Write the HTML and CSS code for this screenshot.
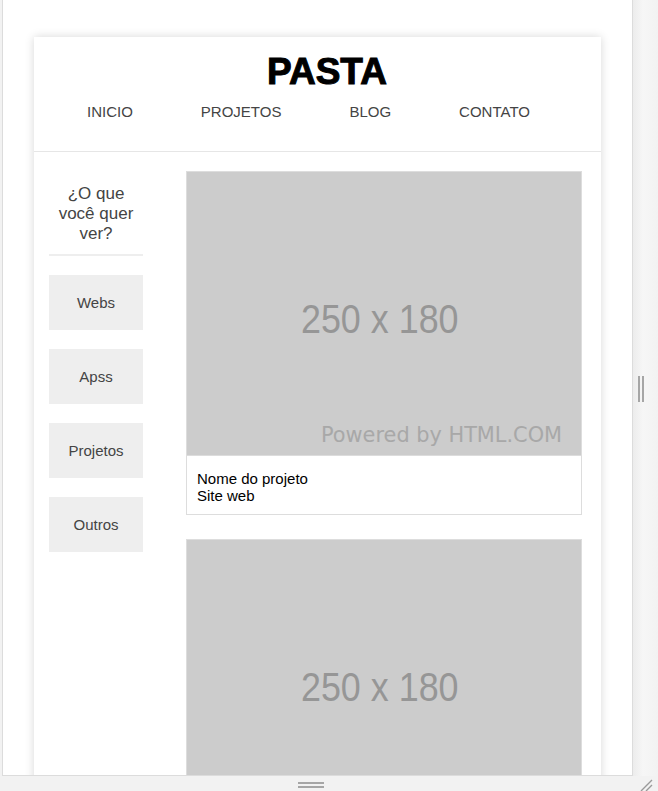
FILE: index.html
```html
<!DOCTYPE html>
<html lang="pt">
<head>
<meta charset="utf-8">
<title>PASTA</title>
<link rel="stylesheet" href="styles.css">
</head>
<body>
<div class="stage">
  <div class="top-row">
    <div class="frame">
      <div class="card">
        <header class="site-header">
          <h1 class="logo">PASTA</h1>
          <nav class="nav">
            <a href="#">INICIO</a>
            <a href="#">PROJETOS</a>
            <a href="#">BLOG</a>
            <a href="#">CONTATO</a>
          </nav>
        </header>
        <div class="content">
          <aside class="sidebar">
            <h2 class="side-title">¿O que você quer ver?</h2>
            <a class="side-btn" href="#">Webs</a>
            <a class="side-btn" href="#">Apss</a>
            <a class="side-btn" href="#">Projetos</a>
            <a class="side-btn" href="#">Outros</a>
          </aside>
          <main class="projects">
            <div class="project">
              <div class="thumb">
                <svg viewBox="0 0 250 180" preserveAspectRatio="none" xmlns="http://www.w3.org/2000/svg">
                  <rect width="250" height="180" fill="#cccccc"/>
                  <text x="122.3" y="102" text-anchor="middle" class="ph-size" textLength="100" lengthAdjust="spacingAndGlyphs">250 x 180</text>
                  <text x="238" y="171.5" text-anchor="end" class="ph-powered" textLength="153" lengthAdjust="spacingAndGlyphs">Powered by HTML.COM</text>
                </svg>
              </div>
              <div class="caption">Nome do projeto<br>Site web</div>
            </div>
            <div class="project">
              <div class="thumb">
                <svg viewBox="0 0 250 180" preserveAspectRatio="none" xmlns="http://www.w3.org/2000/svg">
                  <rect width="250" height="180" fill="#cccccc"/>
                  <text x="122.3" y="102" text-anchor="middle" class="ph-size" textLength="100" lengthAdjust="spacingAndGlyphs">250 x 180</text>
                </svg>
              </div>
            </div>
          </main>
        </div>
      </div>
    </div>
    <div class="v-gutter">
      <span class="v-grip"></span>
    </div>
  </div>
  <div class="h-gutter">
    <span class="h-grip"></span>
    <svg class="resize" width="14" height="12" viewBox="0 0 14 12" xmlns="http://www.w3.org/2000/svg">
      <path d="M2 12 L13 1 M7 12 L13 6" stroke="#9a9a9a" stroke-width="1.4" fill="none"/>
    </svg>
  </div>
</div>
</body>
</html>
```

FILE: styles.css
```css
* { box-sizing: border-box; }
html, body { margin: 0; padding: 0; }
body {
  background: #f2f2f2;
  font-family: "Liberation Sans", Arial, sans-serif;
  width: 658px;
  height: 791px;
  overflow: hidden;
}
.stage {
  display: flex;
  flex-direction: column;
  height: 791px;
  padding-left: 2px;
}
.top-row {
  display: flex;
  height: 776px;
}
.frame {
  width: 631px;
  height: 776px;
  background: #fff;
  border-left: 1px solid #dcdcdc;
  border-right: 1px solid #dcdcdc;
  border-bottom: 1px solid #dcdcdc;
  overflow: hidden;
  padding: 37px 31px 0 31px;
}
.v-gutter {
  flex: 1;
  display: flex;
  align-items: center;
  justify-content: center;
  background: linear-gradient(to right, #ececec, #f6f6f6 40%, #f2f2f2);
}
.v-grip {
  width: 6px;
  height: 26px;
  border-left: 2px solid #a6a6a6;
  border-right: 2px solid #a6a6a6;
  margin-left: -9px;
  margin-top: 2px;
}
.h-gutter {
  flex: 1;
  display: flex;
  align-items: center;
  justify-content: center;
  padding-right: 38px;
  background: #f2f2f2;
}
.h-grip {
  width: 26px;
  height: 6px;
  border-top: 2px solid #a6a6a6;
  border-bottom: 2px solid #a6a6a6;
  margin-top: 2px;
}
.resize {
  position: absolute;
  right: 5px;
  bottom: 0;
}

.card {
  background: #fff;
  box-shadow: 0 0 9px rgba(0, 0, 0, 0.16);
  min-height: 800px;
}
.site-header {
  border-bottom: 1px solid #e6e6e6;
  padding: 15px 0 31px;
  text-align: center;
}
.logo {
  margin: 0;
  padding-left: 19px;
  font-family: "Liberation Sans", Arial, sans-serif;
  font-size: 37px;
  font-weight: 700;
  line-height: 40px;
  color: #000;
  -webkit-text-stroke: 1px #000;
}
.nav {
  display: flex;
  gap: 68px;
  padding-left: 53px;
  margin-top: 11px;
}
.nav a {
  color: #444;
  text-decoration: none;
  font-size: 15px;
  line-height: 17px;
}

.content {
  display: flex;
  padding: 19px 19px 0 15px;
  gap: 43px;
}
.sidebar {
  width: 94px;
  flex: none;
  display: flex;
  flex-direction: column;
}
.side-title {
  margin: 0;
  padding: 13px 0 10px;
  font-size: 17px;
  font-weight: 400;
  line-height: 20px;
  color: #444;
  text-align: center;
  border-bottom: 2px solid #eeeeee;
}
.side-btn {
  display: flex;
  align-items: center;
  justify-content: center;
  height: 55px;
  margin-top: 19px;
  background: #eeeeee;
  color: #444;
  font-size: 15px;
  text-decoration: none;
}

.projects {
  flex: 1;
  display: flex;
  flex-direction: column;
  gap: 24px;
}
.project {
  border: 1px solid #dddddd;
}
.thumb {
  aspect-ratio: 250 / 180;
  width: 100%;
}
.thumb svg {
  display: block;
  width: 100%;
  height: 100%;
}
.ph-size {
  font-family: "Liberation Sans", Arial, sans-serif;
  font-size: 26px;
  fill: #969696;
}
.ph-powered {
  font-family: "DejaVu Sans", sans-serif;
  font-size: 14px;
  fill: #a8a8a8;
}
.caption {
  padding: 14px 10px 10px;
  font-size: 15px;
  line-height: 17px;
  color: #000;
}
```
